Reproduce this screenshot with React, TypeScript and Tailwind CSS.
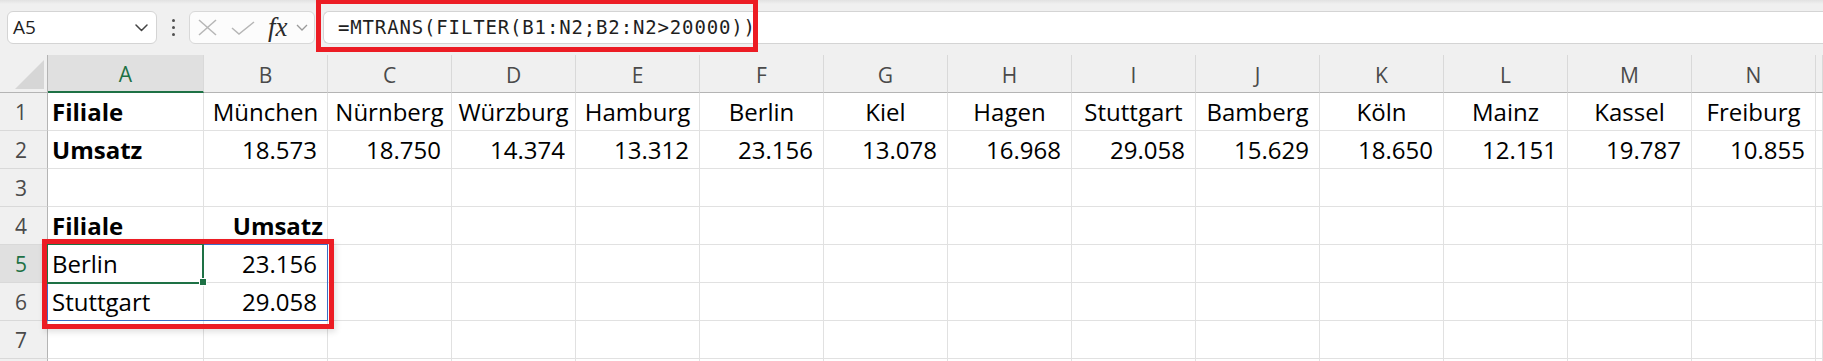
import React from "react";

const cols = ["A", "B", "C", "D", "E", "F", "G", "H", "I", "J", "K", "L", "M", "N"];
const cities = ["München", "Nürnberg", "Würzburg", "Hamburg", "Berlin", "Kiel", "Hagen", "Stuttgart", "Bamberg", "Köln", "Mainz", "Kassel", "Freiburg"];
const sales = ["18.573", "18.750", "14.374", "13.312", "23.156", "13.078", "16.968", "29.058", "15.629", "18.650", "12.151", "19.787", "10.855"];

type Align = "left" | "center" | "right" | "rightTight";

type CellData = { text: string; bold?: boolean; align?: Align };

const rows: CellData[][] = [
  [{ text: "Filiale", bold: true }, ...cities.map((c) => ({ text: c, align: "center" as Align }))],
  [{ text: "Umsatz", bold: true }, ...sales.map((s) => ({ text: s, align: "right" as Align }))],
  [],
  [{ text: "Filiale", bold: true }, { text: "Umsatz", bold: true, align: "rightTight" }],
  [{ text: "Berlin" }, { text: "23.156", align: "right" }],
  [{ text: "Stuttgart" }, { text: "29.058", align: "right" }],
  [],
  [],
];

const alignClass: Record<Align, string> = {
  left: "text-left pl-[4px]",
  center: "text-center",
  right: "text-right pr-[10px]",
  rightTight: "text-right pr-[4px]",
};

function Chevron({ className }: { className?: string }) {
  return (
    <svg width="13" height="8" viewBox="0 0 13 8" className={className} fill="none">
      <polyline points="1,1 6.5,6.5 12,1" stroke="currentColor" strokeWidth="1.5" strokeLinecap="round" strokeLinejoin="round" />
    </svg>
  );
}

function TopBar() {
  return (
    <div className="relative flex h-[55px] items-center bg-[linear-gradient(#e2e2e2,#f0f0f0_4px)]">
      {/* Name box */}
      <div className="ml-[7px] flex h-[33px] w-[150px] items-center justify-between rounded-md border border-[#d4d4d4] bg-white pl-[5px] pr-[8px]">
        <span className="font-['Open_Sans',sans-serif] text-[19px] text-[#1f1f1f]">A5</span>
        <Chevron className="text-[#444]" />
      </div>

      {/* More dots */}
      <div className="flex w-[32px] flex-col items-center gap-[4px]">
        <span className="h-[3px] w-[3px] rounded-full bg-[#505050]" />
        <span className="h-[3px] w-[3px] rounded-full bg-[#505050]" />
        <span className="h-[3px] w-[3px] rounded-full bg-[#505050]" />
      </div>

      {/* Cancel / enter / fx */}
      <div className="flex h-[33px] w-[126px] items-center rounded-md border border-[#d8d8d8] bg-[#fcfcfc] pl-[8px]">
        <svg width="19" height="17" viewBox="0 0 19 17" fill="none">
          <line x1="1" y1="1" x2="18" y2="16" stroke="#b6b6b6" strokeWidth="1.5" />
          <line x1="18" y1="1" x2="1" y2="16" stroke="#b6b6b6" strokeWidth="1.5" />
        </svg>
        <svg width="24" height="14" viewBox="0 0 24 14" fill="none" className="ml-[14px]">
          <polyline points="1,7 8,13 23,1" stroke="#b6b6b6" strokeWidth="1.5" fill="none" />
        </svg>
        <span className="ml-[13px] font-['Liberation_Serif',serif] text-[27px] italic leading-none text-[#2b2b2b]">fx</span>
        <svg width="12" height="7" viewBox="0 0 12 7" fill="none" className="ml-[8px]">
          <polyline points="1,1 6,6 11,1" stroke="#9a9a9a" strokeWidth="1.3" />
        </svg>
      </div>

      {/* Formula input */}
      <div className="ml-[8px] flex h-[33px] flex-1 items-center rounded-l-md border-y border-l border-[#d4d4d4] bg-white pl-[14px]">
        <span className="font-['DejaVu_Sans_Mono',monospace] text-[19px] tracking-[0.85px] text-[#1f1f1f]">
          =MTRANS(FILTER(B1:N2;B2:N2&gt;20000))
        </span>
      </div>

      {/* Highlight */}
      <div className="pointer-events-none absolute left-[316px] top-[-1px] h-[53px] w-[442px] border-[5px] border-[#ec1c24]" />
    </div>
  );
}

function Sheet() {
  const headerCell = "border-r border-b border-r-[#d9d9d9] border-b-[#b4b4b4] bg-[#f0f0f0] text-center font-['Open_Sans',sans-serif] text-[21px] leading-[38px] pt-px text-[#4a4a4a]";
  return (
    <div className="relative h-[306px] overflow-hidden bg-white">
      <div className="grid auto-rows-[38px] grid-cols-[48px_156px_repeat(13,124px)_1fr]">
        {/* corner */}
        <div className="flex items-end justify-end border-r border-b border-r-[#b4b4b4] border-b-[#b4b4b4] bg-[#f0f0f0] pb-[3px] pr-[3px]">
          <svg width="29" height="29" viewBox="0 0 29 29">
            <polygon points="29,0 29,29 0,29" fill="#d6d6d6" />
          </svg>
        </div>
        {cols.map((c) =>
          c === "A" ? (
            <div key={c} className="border-r border-r-[#d9d9d9] border-b-2 border-b-[#1e7145] bg-[#e0e0e0] pt-px text-center font-['Open_Sans',sans-serif] text-[21px] leading-[37px] text-[#1e7145]">
              {c}
            </div>
          ) : (
            <div key={c} className={headerCell}>
              {c}
            </div>
          )
        )}
        <div className={headerCell} />

        {rows.map((row, r) => {
          const n = r + 1;
          const active = n === 5;
          return (
            <React.Fragment key={n}>
              <div
                className={
                  "border-b border-r pr-[5px] pt-px text-center font-['Open_Sans',sans-serif] text-[21px] leading-[37px] " +
                  (active
                    ? "border-b-[#d9d9d9] border-r-[#1e7145] bg-[#e0e0e0] text-[#1e7145]"
                    : "border-b-[#d9d9d9] border-r-[#b4b4b4] bg-[#f0f0f0] text-[#4a4a4a]")
                }
              >
                {n < 8 ? n : ""}
              </div>
              {Array.from({ length: 15 }).map((_, ci) => {
                const cell = row[ci];
                return (
                  <div
                    key={ci}
                    className={
                      "overflow-visible whitespace-nowrap border-r border-b border-[#e1e1e1] font-['Open_Sans',sans-serif] text-[24px] leading-[38px] text-black " +
                      (cell ? alignClass[cell.align ?? "left"] + (cell.bold ? " font-bold" : "") : "")
                    }
                  >
                    {cell?.text}
                  </div>
                );
              })}
            </React.Fragment>
          );
        })}
      </div>

      {/* spill range outline */}
      <div className="pointer-events-none absolute left-[47px] top-[189px] h-[77px] w-[281px] border border-[#3b6fc6]" />
      {/* active cell */}
      <div className="pointer-events-none absolute left-[46px] top-[188px] h-[41px] w-[158px] border-2 border-[#1e7145]" />
      {/* fill handle */}
      <div className="pointer-events-none absolute left-[199px] top-[223px] h-[8px] w-[8px] border border-white bg-[#1e7145]" />
      {/* highlight */}
      <div className="pointer-events-none absolute left-[42px] top-[184px] h-[90px] w-[292px] border-[5px] border-[#ec1c24] shadow-[2px_3px_6px_rgba(0,0,0,0.12)]" />
    </div>
  );
}

export default function App() {
  return (
    <div className="h-[361px] w-[1823px] overflow-hidden bg-[#f0f0f0]">
      <TopBar />
      <Sheet />
    </div>
  );
}
